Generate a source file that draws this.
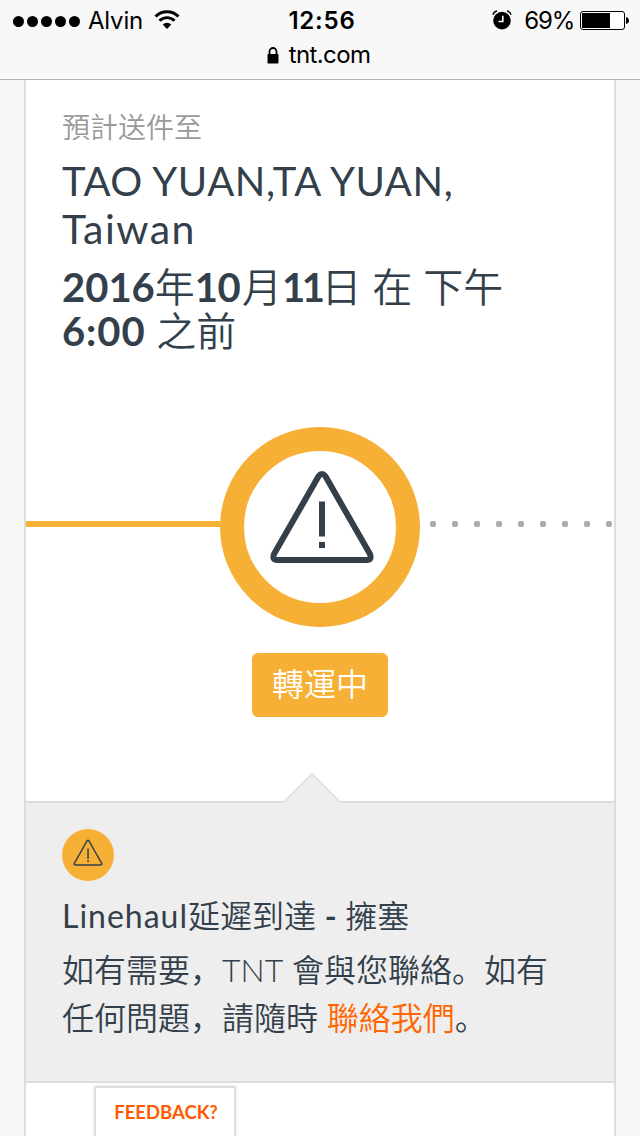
<template>
  <div class="screen">
    <header class="browser-bar">
      <div class="status-row">
        <div class="status-left">
          <span class="signal"><i v-for="n in 5" :key="n"></i></span>
          <span class="carrier">Alvin</span>
          <svg class="wifi" width="26" height="20" viewBox="0 0 26 20">
            <path d="M1.500 6.500a16.300 16.300 0 0 1 23 0" fill="none" stroke="#000" stroke-width="3" />
            <path d="M5.500 10.800a10.600 10.600 0 0 1 15 0" fill="none" stroke="#000" stroke-width="2.800" />
            <path d="M8.700 14.600a6.100 6.100 0 0 1 8.600 0L13 19z" />
          </svg>
        </div>
        <span class="clock">12:56</span>
        <div class="status-right">
          <svg class="alarm" width="20" height="20" viewBox="0 0 20 20">
            <circle cx="10" cy="10.600" r="8.800" />
            <path d="M1 4.700Q1.800 1.700 5 1M19 4.700Q18.200 1.700 15 1" fill="none" stroke="#000" stroke-width="1.500" />
            <path d="M10.800 5.800v5.700H6.500" fill="none" stroke="#fff" stroke-width="1.600" />
          </svg>
          <span class="percent">69%</span>
          <svg class="battery" width="49" height="20" viewBox="0 0 49 20">
            <rect x=".5" y=".5" width="44" height="18" rx="2.500" fill="#fff" stroke="#000" />
            <path d="M2 2h28v15H2zM46 6q3 1 3 3.500t-3 3.500z" />
          </svg>
        </div>
      </div>
      <div class="address">
        <svg width="12" height="17" viewBox="0 0 12 17">
          <path d="M2.500 8V4.500a3.500 3.500 0 0 1 7 0V8" fill="none" stroke="#000" stroke-width="1.800" />
          <rect x=".5" y="7" width="11" height="9.500" rx=".8" />
        </svg>
        <span>tnt.com</span>
      </div>
    </header>

    <main class="card">
      <section class="delivery">
        <p class="label">預計送件至</p>
        <h1>
          <span class="line city">TAO YUAN,TA YUAN,</span>
          <span class="line country">Taiwan</span>
        </h1>
        <p class="date">
          <span class="line"><b>2016</b>年<b class="month">10</b>月<b class="day">11</b>日 在 下午</span>
          <span class="line"><b class="time">6:00</b> 之前</span>
        </p>
      </section>

      <section class="progress">
        <div class="track">
          <span class="done"></span>
          <div class="ring">
            <svg width="104" height="94" viewBox="0 0 104 94">
              <path d="M48.700 6.100 4.300 83.500Q1.500 90 7.500 90h89Q102.500 90 99.700 83.500L55.300 6.100Q52 1.900 48.700 6.100Z" fill="none" stroke="#333f4a" stroke-width="6" stroke-linejoin="round" />
              <path d="M49 31.500h6v35h-6zM49 72h6v6h-6z" fill="#333f4a" />
            </svg>
          </div>
          <span class="todo"><i v-for="n in 9" :key="n"></i></span>
        </div>
        <span class="badge">轉運中</span>
      </section>

      <section class="notice">
        <svg class="pointer" width="58" height="30" viewBox="0 0 58 30">
          <path d="M0 30 29 1 58 30z" fill="#eee" />
          <path d="M1 29 29 1 57 29" fill="none" stroke="#ddd" stroke-width="1.600" />
        </svg>
        <div class="notice-icon">
          <svg width="30" height="28" viewBox="0 0 30 28">
            <path d="M14.200 1.700 1.400 24.200Q.8 26 2.500 26h25q1.700 0 1.100-1.800L15.800 1.700Q15 .6 14.200 1.700Z" fill="none" stroke="#333f4a" stroke-width="1.500" />
            <path d="M14.300 9.500h1.500v10.500h-1.500zM14.300 21h1.500v2h-1.500z" fill="#333f4a" />
          </svg>
        </div>
        <h2><span class="latin">Linehaul</span>延遲到達 <span class="dash">-</span> 擁塞</h2>
        <p class="line">如有需要，<span class="tnt">TNT</span> 會與您聯絡。如有</p>
        <p class="line">任何問題，請隨時 <a>聯絡我們</a>。</p>
      </section>

      <button class="feedback">FEEDBACK?</button>
    </main>
  </div>
</template>

<style>
body { margin: 0; }
</style>

<style scoped>
.screen { width: 640px; height: 1136px; overflow: hidden; display: flex; flex-direction: column; background: #f7f7f7; color: #333f4a; font-family: Lato, "Noto Sans CJK SC", sans-serif; }
p, h1, h2 { margin: 0; font-weight: 400; }

.browser-bar { box-sizing: border-box; height: 80px; flex: none; background: #f8f8f8; border-bottom: 1px solid #b2b2b2; color: #000; font-family: Inter, sans-serif; }
.status-row { height: 42px; display: grid; grid-template-columns: 1fr auto 1fr; align-items: center; padding: 0 11px 0 13px; font-size: 24px; line-height: 42px; }
.status-left, .status-right { display: flex; align-items: center; }
.status-right { justify-content: flex-end; }
.signal { display: flex; gap: 3px; }
.signal i { width: 11px; height: 11px; border-radius: 50%; background: #000; }
.carrier { margin-left: 8px; letter-spacing: -0.2px; }
.wifi { margin: -2px 0 0 11px; }
.clock { margin-left: 2px; font-weight: 600; letter-spacing: 0.8px; }
.alarm { margin-top: -2px; }
.percent { margin: 0 6px 0 12px; letter-spacing: -1.2px; }
.battery { margin-top: 0; }
.address { display: flex; align-items: center; justify-content: center; gap: 10px; height: 28px; margin: -1px 3px 0 0; font-size: 24px; line-height: 28px; letter-spacing: -0.6px; }

.card { box-sizing: border-box; width: 592px; height: 1056px; margin: 0 auto; background: #fff; border: solid #ddd; border-width: 0 2px; }
.line { display: block; height: 48px; line-height: 48px; white-space: nowrap; }

.delivery { box-sizing: border-box; height: 347px; padding: 27px 36px 0; }
.label { height: 40px; line-height: 40px; font-size: 28px; font-weight: 350; color: #999; }
h1 { height: 96px; margin-top: 10px; font-size: 40px; }
.city { letter-spacing: 0.6px; }
.country { font-size: 41px; letter-spacing: 1.5px; }
.date { margin-top: 12px; font-size: 40px; font-weight: 350; }
.date .line { height: 44px; line-height: 44px; }
.date b { font-weight: 700; }
.date .month { letter-spacing: -0.6px; margin-right: 2px; }
.date .day { letter-spacing: -3.5px; }
.date .time { letter-spacing: 0.9px; }

.progress { height: 374px; display: flex; flex-direction: column; align-items: center; }
.track { width: 100%; display: flex; justify-content: center; }
.done { flex: 0 0 194px; height: 6px; margin-top: 94px; background: #f6b036; }
.ring { box-sizing: border-box; width: 200px; height: 200px; border: 24px solid #f6b036; border-radius: 50%; display: flex; align-items: flex-start; justify-content: center; flex: none; }
.ring svg { margin: 19px 0 0 3px; flex: none; }
.todo { flex: 0 0 194px; box-sizing: border-box; display: flex; gap: 16px; padding: 94px 0 0 10px; }
.todo i { width: 6px; height: 6px; border-radius: 2px; background: #aaa; flex: none; }
.badge { width: 136px; height: 64px; margin-top: 26px; border-radius: 6px; background: #f6b036; color: #fff; font-size: 32px; font-weight: 350; line-height: 62px; text-align: center; }

.notice { position: relative; box-sizing: border-box; height: 282px; padding: 26px 36px 0; background: #eee; border: solid #ddd; border-width: 2px 0; font-size: 32px; }
.pointer { position: absolute; left: 257px; top: -30px; }
.notice-icon { width: 52px; height: 52px; border-radius: 50%; background: #f6b036; display: flex; justify-content: center; }
.notice-icon svg { margin-top: 10px; }
h2 { height: 48px; margin-top: 11px; font-size: 32px; font-weight: 350; line-height: 48px; white-space: nowrap; }
.latin { font-weight: 400; letter-spacing: 1px; }
.dash { font-weight: 700; }
.notice .line { font-weight: 350; }
.notice .line:nth-of-type(1) { margin-top: 6px; }
.tnt { font-weight: 300; letter-spacing: 0; }
a { color: #f60; }

.feedback { display: block; box-sizing: border-box; width: 142px; height: 60px; margin: 3px 0 0 68px; padding: 0 0 7px 2px; border: 2px solid #ddd; border-radius: 2px; background: #fff; box-shadow: 0 0 3px rgba(0, 0, 0, 0.15); color: #ff5a00; font: 700 18.5px/49px Lato, sans-serif; }
</style>
